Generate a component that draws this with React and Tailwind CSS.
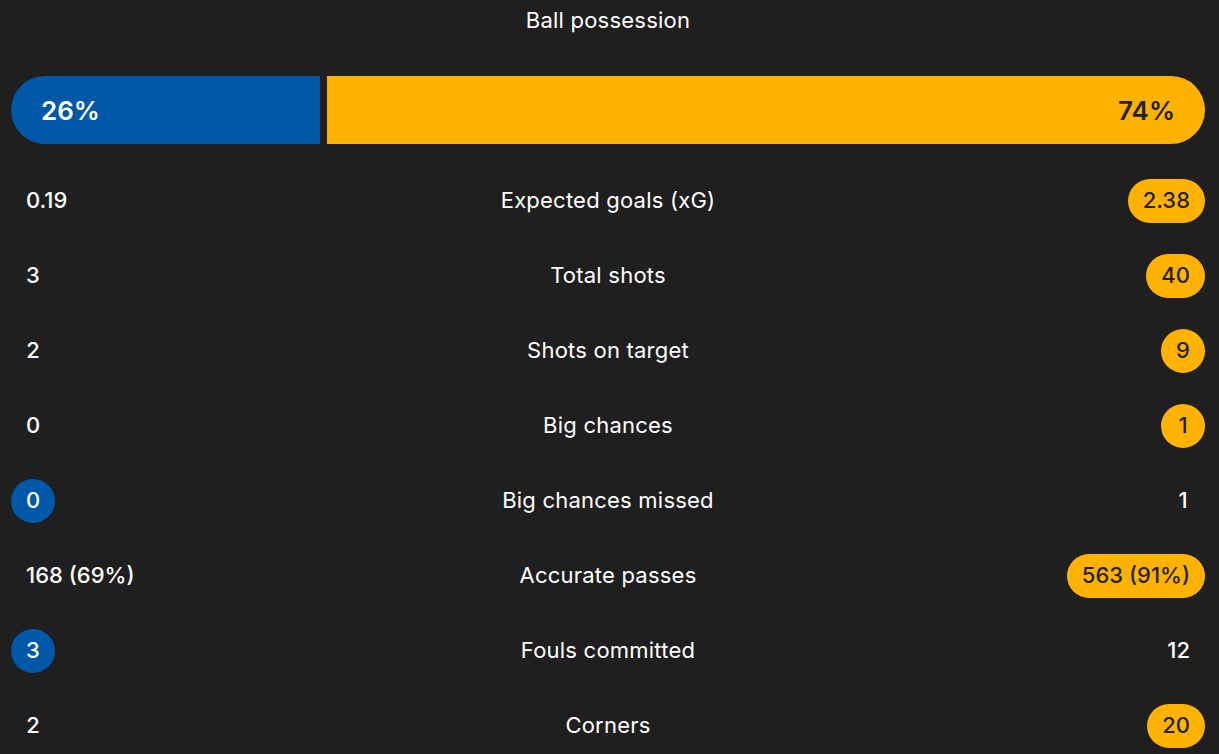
import React from "react";

// match stats
const stats = [
  { label: "Expected goals (xG)", home: "0.19", away: "2.38", win: "away" },
  { label: "Total shots", home: "3", away: "40", win: "away" },
  { label: "Shots on target", home: "2", away: "9", win: "away" },
  { label: "Big chances", home: "0", away: "1", win: "away" },
  { label: "Big chances missed", home: "0", away: "1", win: "home" },
  { label: "Accurate passes", home: "168 (69%)", away: "563 (91%)", win: "away" },
  { label: "Fouls committed", home: "3", away: "12", win: "home" },
  { label: "Corners", home: "2", away: "20", win: "away" },
];

const Value = ({ text, active, side }) => {
  let cls = "h-[44px] min-w-[44px] px-[15px] rounded-full flex items-center justify-center text-[22px] font-medium";
  if (active && side === "home") cls += " bg-[#0058a9] text-white";
  else if (active) cls += " bg-[#ffb300] text-[#222222]";
  else cls += " text-white";
  return <div className={cls}>{text}</div>;
};

const App = () => {
  const home = 26;
  const away = 74;

  return (
    <div
      className="min-h-screen bg-[#1f1f1f] text-white pl-[11px] pr-[14px]"
      style={{ fontFamily: "Inter, 'Noto Sans', sans-serif" }}
    >
      <div className="h-[40px] flex items-center justify-center text-[22px] tracking-[0.01em]">Ball possession</div>

      <div className="mt-[36px] flex h-[68px] gap-[7px]">
        <div className="bg-[#0058a9] rounded-l-full flex items-center" style={{ flex: `${home} 1 0px` }}>
          <span className="ml-[30px] text-[26px] font-semibold">{home}%</span>
        </div>
        <div
          className="bg-[#ffb300] rounded-r-full flex items-center justify-end text-[#222222]"
          style={{ flex: `${away} 1 0px` }}
        >
          <span className="mr-[30px] text-[26px] font-semibold">{away}%</span>
        </div>
      </div>

      <div className="mt-[19px]">
        {stats.map((s) => (
          <div key={s.label} className="h-[75px] flex items-center justify-between relative">
            <Value text={s.home} active={s.win === "home"} side="home" />
            <div className="absolute left-0 right-0 text-center text-[22px] tracking-[0.01em] pointer-events-none">
              {s.label}
            </div>
            <Value text={s.away} active={s.win === "away"} side="away" />
          </div>
        ))}
      </div>
    </div>
  );
};

export default App;
